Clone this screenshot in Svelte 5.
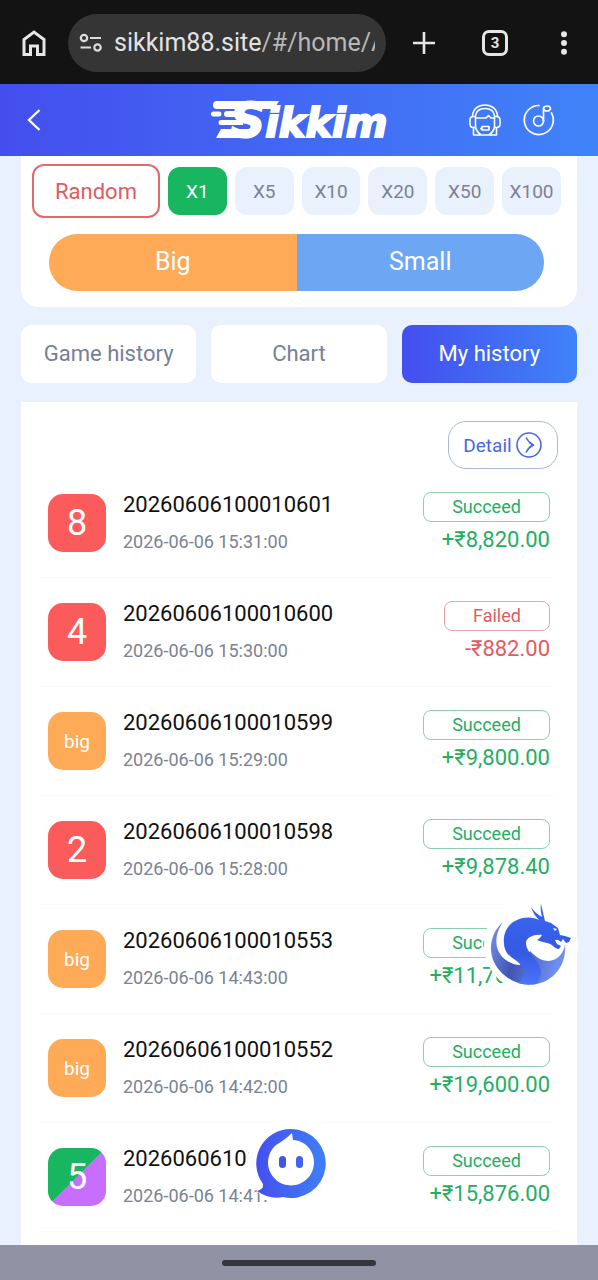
<script>
  const multipliers = ['X1', 'X5', 'X10', 'X20', 'X50', 'X100'];
  const tabs = ['Game history', 'Chart', 'My history'];
  let multiplier = $state('X1');
  let tab = $state('My history');

  const bets = [
    { pick: '8', tone: 'red', id: '20260606100010601', time: '2026-06-06 15:31:00', won: true, amount: '+₹8,820.00' },
    { pick: '4', tone: 'red', id: '20260606100010600', time: '2026-06-06 15:30:00', won: false, amount: '-₹882.00' },
    { pick: 'big', tone: 'orange', id: '20260606100010599', time: '2026-06-06 15:29:00', won: true, amount: '+₹9,800.00' },
    { pick: '2', tone: 'red', id: '20260606100010598', time: '2026-06-06 15:28:00', won: true, amount: '+₹9,878.40' },
    { pick: 'big', tone: 'orange', id: '20260606100010553', time: '2026-06-06 14:43:00', won: true, amount: '+₹11,760.00' },
    { pick: 'big', tone: 'orange', id: '20260606100010552', time: '2026-06-06 14:42:00', won: true, amount: '+₹19,600.00' },
    { pick: '5', tone: 'split', id: '20260606100010551', time: '2026-06-06 14:41:00', won: true, amount: '+₹15,876.00' }
  ];
</script>

<div class="screen">
  <div class="browser">
    <button class="icon" aria-label="Home page">
      <svg width="28" height="28" viewBox="0 0 28 28" fill="none" stroke="#e6e6e6" stroke-width="3">
        <path d="M4 25.500V10.500L14 3L24 10.500V25.500H17.500V17H10.500V25.500Z" />
      </svg>
    </button>
    <div class="address">
      <svg width="24" height="22" viewBox="0 0 24 22" fill="none" stroke="#dcdcdc" stroke-width="2.200">
        <circle cx="5" cy="6" r="3.200" /><path d="M11 6H22M1.500 15.500H12" /><circle cx="18.500" cy="15.500" r="3.200" />
      </svg>
      <span class="url">sikkim88.site<span class="path">/#/home/A</span></span>
    </div>
    <button class="icon" aria-label="New tab">
      <svg width="24" height="24" viewBox="0 0 24 24" stroke="#e6e6e6" stroke-width="2.600"><path d="M12 1V23M1 12H23" /></svg>
    </button>
    <button class="icon count" aria-label="Open tabs">3</button>
    <button class="icon" aria-label="Menu">
      <svg width="8" height="24" viewBox="0 0 8 24" fill="#e6e6e6"><circle cx="4" cy="3.300" r="3" /><circle cx="4" cy="12" r="3" /><circle cx="4" cy="20.700" r="3" /></svg>
    </button>
  </div>

  <header>
    <button class="icon back" aria-label="Back">
      <svg width="16" height="24" viewBox="0 0 16 24" fill="none" stroke="#fff" stroke-width="2.400"><path d="M13.500 2L3 12L13.500 22" /></svg>
    </button>
    <div class="logo">
      <svg width="70" height="40" viewBox="0 0 70 40" fill="#fff">
        <path d="M6 1H68L63 9H6A4 4 0 0 1 6 1Z" />
        <path d="M2.500 11.500H8A2.500 2.500 0 0 1 8 16.500H2.500A2.500 2.500 0 0 1 2.500 11.500ZM16 11H30V17H16A3 3 0 0 1 16 11ZM10 20H32V25H10A2.500 2.500 0 0 1 10 20Z" />
        <path d="M10 29H40L36 38H5Z" />
      </svg>
      <span class="initial">S</span><span class="rest">ikkim</span>
    </div>
    <div class="tools">
      <button class="icon" aria-label="Support">
        <svg width="32" height="32" viewBox="0 0 32 32" fill="none" stroke="#fff" stroke-width="1.600" stroke-linejoin="round">
          <path d="M3.500 12C4 5 9 1 16 1S28 5 28.500 12" />
          <path d="M6.500 12C7 7.500 10.500 4.500 16 4.500S25 7.500 25.500 12" />
          <path d="M4.500 12.500H6.500V23.500H4.500Q1 23.500 1 20V16Q1 12.500 4.500 12.500ZM27.500 12.500H25.500V23.500H27.500Q31 23.500 31 20V16Q31 12.500 27.500 12.500Z" />
          <path d="M6.500 14H17L19.500 11.500L22 14H25.500" />
          <path d="M4.500 24V31H27.500V24M6.500 23.500Q8 28.500 12 31M25.500 23.500Q24 28.500 20 31" />
          <path d="M11 24.500H13M13 22.500H20V26H13Z" />
        </svg>
      </button>
      <button class="icon" aria-label="Music">
        <svg width="32" height="32" viewBox="0 0 32 32" fill="none" stroke="#fff" stroke-width="1.700" stroke-linecap="round">
          <path d="M16 1.500A14.500 14.500 0 1 0 28.500 9" />
          <circle cx="15.500" cy="17" r="5" /><path d="M20.500 17V4.500" /><ellipse cx="24" cy="4.500" rx="3.500" ry="2.500" />
        </svg>
      </button>
    </div>
  </header>

  <main>
    <section class="betting">
      <div class="choices">
        <button class="random">Random</button>
        {#each multipliers as m}
          <button class="multi" class:active={multiplier === m} onclick={() => (multiplier = m)}>{m}</button>
        {/each}
      </div>
      <div class="sizes"><button class="big">Big</button><button class="small">Small</button></div>
    </section>

    <nav>
      {#each tabs as t}
        <button class:active={tab === t} onclick={() => (tab = t)}>{t}</button>
      {/each}
    </nav>

    <section class="history">
      <button class="detail">
        Detail
        <svg width="28" height="28" viewBox="0 0 28 28" fill="none" stroke="#4669e0" stroke-width="1.600">
          <circle cx="14" cy="14" r="12" /><path d="M11 6.500Q13.500 11.500 18 14Q13.500 16.500 11 21.500" /><path d="M14.500 11.500L18 14L14.500 16.500" />
        </svg>
      </button>
      <ul>
        {#each bets as bet}
          <li>
            <span class="tile {bet.tone}" class:word={bet.pick === 'big'}>{bet.pick}</span>
            <div class="info"><span class="id">{bet.id}</span><time>{bet.time}</time></div>
            <div class="result" class:lost={!bet.won}>
              <span class="badge">{bet.won ? 'Succeed' : 'Failed'}</span>
              <span class="amount">{bet.amount}</span>
            </div>
          </li>
        {/each}
      </ul>
    </section>
  </main>

  <button class="float dragon" aria-label="Dragon bonus">
    <svg width="88" height="88" viewBox="0 0 88 88">
      <defs>
        <linearGradient id="ring" x1="0" y1="0" x2="1" y2="0.300"><stop offset="0" stop-color="#7b93e8" /><stop offset="0.450" stop-color="#4055b5" /><stop offset="1" stop-color="#6f8eef" /></linearGradient>
        <linearGradient id="neck" x1="0" y1="0" x2="0" y2="1"><stop offset="0" stop-color="#3a67f2" /><stop offset="0.600" stop-color="#3559e2" /><stop offset="1" stop-color="#4a76f8" /></linearGradient>
      </defs>
      <path d="M16 21C1 34 0 56 13 70C28 87 54 88 68 73C76 65 79 54 78 43C77 52 71 59 62 60C54 60 49 56 43 50L33 64C22 63 13 57 10 46C8 37 11 28 16 21Z" fill="url(#ring)" />
      <path d="M52 19C47 16 36 15 28 20C19 25 16 34 17 43C18 55 27 57 33 63C39 70 37 77 31 82C37 84 44 84 49 83C57 75 55 66 47 57C42 51 39 47 39 42C39 36 48 33 55 34C53 37 52 38 50 39C57 42 62 41 66 45C68 47 70 48 72 48L74 45L70 43L68 39Q71 38 74 41L76 38L79 42L82 41L84 37L78 35L73 34L71 27L64 22L58 20L54 3Q53 9 55 16Q48 12 44 6Q46 13 52 19Z" fill="url(#neck)" />
      <path d="M66 27L70 28L68 30Z" fill="#fff" />
    </svg>
  </button>
  <button class="float chat" aria-label="Chat">
    <svg width="88" height="88" viewBox="0 0 88 88">
      <defs><linearGradient id="bubble"><stop offset="0" stop-color="#454fee" /><stop offset="1" stop-color="#3f7ff7" /></linearGradient></defs>
      <path d="M44 10A34.500 34.500 0 1 1 36 78Q23 81 10 72Q17 70 16 65A34.500 34.500 0 0 1 44 10Z" fill="url(#bubble)" />
      <path d="M45 14L46 21C60 22 67 33 67 43A23 23 0 1 1 29 26Q39 20 45 14Z" fill="#fff" />
      <rect x="32" y="37" width="7" height="12" rx="3.500" fill="#4355e8" /><rect x="49" y="37" width="7" height="12" rx="3.500" fill="#4363ef" />
    </svg>
  </button>

  <footer><span></span></footer>
</div>

<style>
  :global(body) { margin: 0; }
  * { box-sizing: border-box; }
  button { border: 0; background: none; padding: 0; margin: 0; font: inherit; color: inherit; cursor: pointer; }
  svg { display: block; flex: none; }
  .screen { position: relative; display: flex; flex-direction: column; height: 100vh; overflow: hidden; background: #e9f1fc; font-family: Roboto, sans-serif; }
  .icon { display: flex; align-items: center; justify-content: center; flex: none; }

  .browser { display: flex; align-items: center; height: 84px; flex: none; padding: 2px 30px 0 20px; background: #131313; }
  .address { display: flex; align-items: center; gap: 11px; flex: 1; min-width: 0; height: 58px; margin: 0 26px 0 20px; padding: 0 11px; border-radius: 29px; background: #353535; }
  .url { flex: 1; min-width: 0; overflow: hidden; white-space: nowrap; font-size: 25px; line-height: 36px; color: #e3e3e3; }
  .path { color: #b8b8b8; }
  .count { width: 26px; height: 26px; margin: 0 52px 0 46px; border: 3px solid #e6e6e6; border-radius: 7px; font-size: 15px; font-weight: 700; color: #e6e6e6; }

  header { display: grid; grid-template-columns: 1fr auto 1fr; align-items: center; height: 72px; flex: none; padding: 0 26px; background: linear-gradient(90deg, #444eee, #4083f9); color: #fff; }
  .back { justify-self: start; }
  .logo { display: flex; align-items: baseline; height: 44px; font-family: "DejaVu Sans", sans-serif; font-style: italic; font-weight: 700; line-height: 44px; }
  .logo svg { align-self: center; margin-right: -50px; }
  .initial { font-size: 48px; -webkit-text-stroke: 2px #fff; }
  .rest { font-size: 40px; -webkit-text-stroke: 2px #fff; }
  .tools { display: flex; gap: 22px; justify-self: end; margin-right: 17px; }

  main { flex: 1; min-height: 0; overflow: hidden; padding: 0 21px; }
  .betting { padding: 8px 16px 16px 11px; border-radius: 0 0 18px 18px; background: #fff; }
  .choices { display: flex; align-items: center; gap: 8px; }
  .random { width: 128px; height: 54px; border: 2px solid #e5696b; border-radius: 12px; font-size: 22px; color: #e25b5e; }
  .multi { flex: 1; min-width: 0; height: 48px; border-radius: 12px; background: #e9f1fc; font-size: 19px; color: #7b8294; }
  .multi.active { background: #18b660; color: #fff; }
  .sizes { display: flex; height: 57px; margin: 16px 17px 0; border-radius: 29px; overflow: hidden; font-size: 25px; color: #fff; }
  .sizes button { flex: 1; padding-bottom: 2px; }
  .big { background: #feaa57; }
  .small { background: #6da7f4; }

  nav { display: flex; gap: 15px; margin: 18px 0 19px; }
  nav button { flex: 1; height: 58px; padding-bottom: 2px; border-radius: 10px; background: #fff; font-size: 22px; color: #768096; }
  nav button.active { background: linear-gradient(90deg, #444eee, #4083f9); color: #fff; }

  .history { display: flex; flex-direction: column; padding: 19px 19px 40px; background: #fff; }
  .detail { display: flex; align-items: center; justify-content: center; gap: 3px; align-self: flex-end; width: 110px; height: 48px; border: 1px solid #a9b8dc; border-radius: 18px; font-size: 19px; color: #4669e0; }
  ul { margin: 0; padding: 0; list-style: none; }
  li { display: flex; align-items: center; height: 109px; padding: 0 8px; border-bottom: 1px solid #fbfbfd; }
  .tile { display: flex; align-items: center; justify-content: center; width: 58px; height: 58px; border-radius: 15px; font-size: 36px; color: #fff; }
  .tile.word { font-size: 19px; }
  .red { background: #fb5b5b; }
  .orange { background: #feaa57; }
  .split { background: linear-gradient(135deg, #18b660 50%, #c86eff 50%); }
  .info { display: flex; flex-direction: column; gap: 12px; flex: 1; margin-left: 17px; }
  .id { font-size: 22px; line-height: 26px; color: #111; }
  time { font-size: 18px; line-height: 24px; color: #7b8294; }
  .result { display: flex; flex-direction: column; align-items: flex-end; gap: 4px; color: #25ae62; }
  .badge { width: 127px; height: 30px; border: 1px solid #8fceae; border-radius: 8px; font-size: 18px; line-height: 28px; text-align: center; }
  .amount { font-size: 22px; line-height: 28px; }
  .lost { color: #e25b5e; }
  .lost .badge { width: 106px; border-color: #e8a5a7; }

  .float { position: absolute; width: 88px; height: 88px; border-radius: 50%; background: #fff; }
  .dragon { right: 23px; bottom: 291px; box-shadow: 0 0 0 3px #fff; }
  .chat { left: 247px; bottom: 73px; }

  footer { display: flex; align-items: center; justify-content: center; height: 35px; flex: none; background: #9093a3; }
  footer span { width: 154px; height: 6px; border-radius: 3px; background: #35363d; }
</style>
